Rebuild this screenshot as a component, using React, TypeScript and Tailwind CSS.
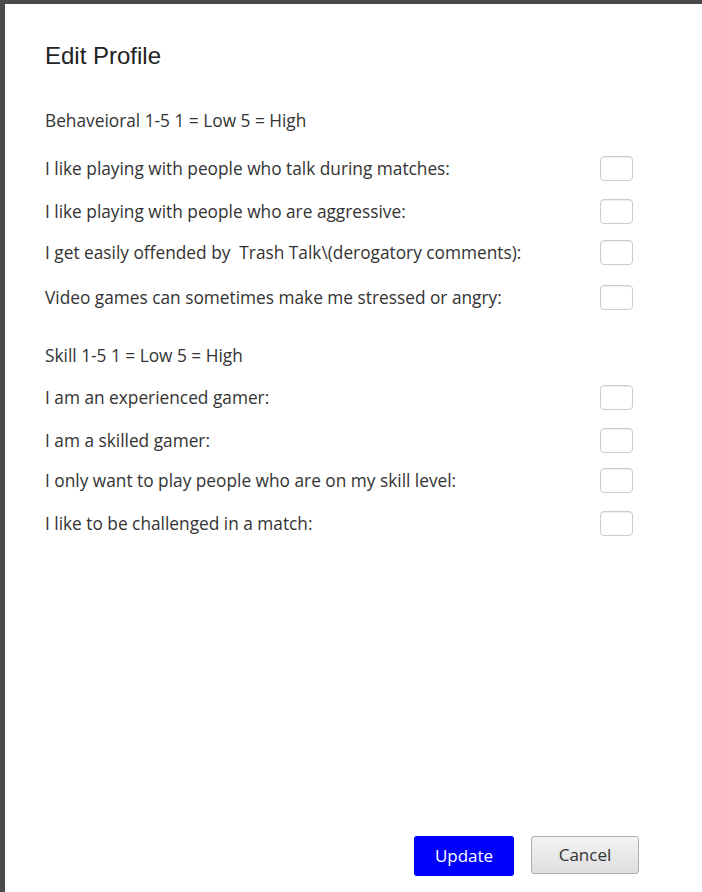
import React from "react";

const section1 = [
  { t: "I like playing with people who talk during matches:", mt: "mt-[24px]" },
  { t: "I like playing with people who are aggressive:", mt: "mt-[19px]" },
  { t: "I get easily offended by \u00a0Trash Talk\\(derogatory comments):", mt: "mt-[17px]" },
  { t: "Video games can sometimes make me stressed or angry:", mt: "mt-[21px]" },
];
const section2 = [
  { t: "I am an experienced gamer:", mt: "mt-[18px]" },
  { t: "I am a skilled gamer:", mt: "mt-[19px]" },
  { t: "I only want to play people who are on my skill level:", mt: "mt-[16px]" },
  { t: "I like to be challenged in a match:", mt: "mt-[19px]" },
];

function Row({ t, mt }: { t: string; mt: string }) {
  return (
    <div className={`flex items-center justify-between h-[24px] ${mt}`}>
      <span className="whitespace-nowrap pt-[2px]">{t}</span>
      <input
        type="text"
        className="w-[33px] h-[25px] rounded-[4px] border border-[#cccccc] bg-white shadow-[inset_0_1px_1px_rgba(0,0,0,0.075)] outline-none"
      />
    </div>
  );
}

export default function App() {
  return (
    <div className="w-[702px] h-[892px] bg-[#4a4a4a] pt-[4px] pl-[5px] overflow-hidden">
      <div className="w-full h-full bg-white flex flex-col pl-[40px] pr-[69px] text-[#333333] text-[17.3px]" style={{ fontFamily: '"Open Sans", "Noto Sans", sans-serif' }}>
        <h1 className="mt-[40px] text-[24px] leading-[24px] text-[#222]" style={{ fontFamily: '"Liberation Sans", Arial, sans-serif' }}>
          Edit Profile
        </h1>
        <div className="mt-[40px] h-[24px] flex items-center pt-[2px]">Behaveioral 1-5 1 = Low 5 = High</div>
        {section1.map((r) => (
          <Row key={r.t} {...r} />
        ))}
        <div className="mt-[34px] h-[24px] flex items-center pt-[2px]">Skill 1-5 1 = Low 5 = High</div>
        {section2.map((r) => (
          <Row key={r.t} {...r} />
        ))}
        <div className="flex-1" />
        <div className="flex justify-end gap-[17px] mb-[16px] mr-[-6px]">
          <button className="w-[100px] h-[40px] rounded-[3px] bg-[#0000ff] text-white text-[17px]">Update</button>
          <button className="w-[108px] h-[38px] rounded-[3px] border border-[#adadad] bg-gradient-to-b from-[#f4f4f4] to-[#dedede] text-[#333] text-[17px]">Cancel</button>
        </div>
      </div>
    </div>
  );
}
